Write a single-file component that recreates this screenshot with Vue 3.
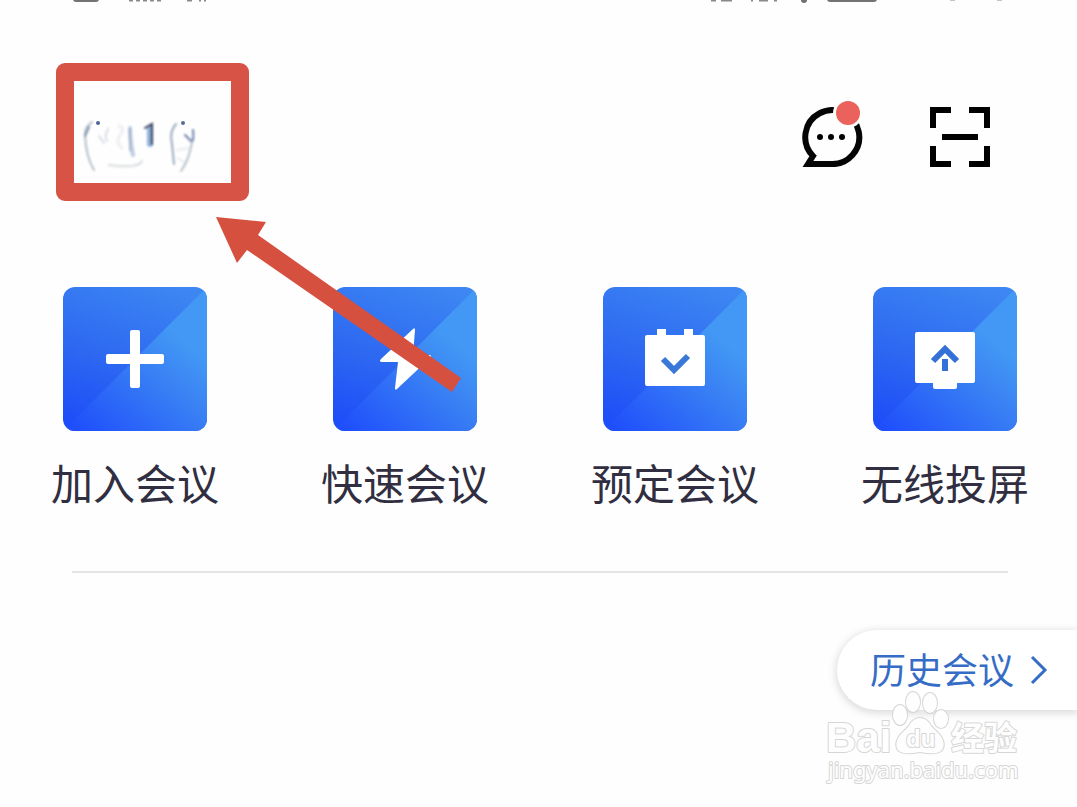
<script setup>
const actions = [
  { id: 'join', label: '加入会议' },
  { id: 'quick', label: '快速会议' },
  { id: 'schedule', label: '预定会议' },
  { id: 'cast', label: '无线投屏' },
]
</script>

<template>
  <main class="screen">
    <svg class="status" viewBox="0 0 1077 6" aria-hidden="true">
      <g fill="none" stroke="#757373" stroke-width="6" stroke-linecap="round">
        <path d="M76 -1H96" />
        <path d="M830 -1H874" />
      </g>
      <path d="M129 0h4M136 0h4M143 0h4M150 0h4M157 0h4M187 0h5M199 0h2M204 0h2M711 0h5M721 0h11M751 0h2M759 0h9M774 0h3" stroke="#8a8888" stroke-width="3" fill="none" />
      <circle cx="804" cy="0" r="3" fill="#707070" />
      <path d="M950 0h5M997 0h5" stroke="#c4c4c4" stroke-width="2" />
    </svg>

    <header class="header">
      <button class="profile" aria-label="个人资料">
        <svg viewBox="0 0 157 102" width="157" height="102" fill="none" stroke-linecap="round">
          <g class="smudge">
            <path d="M18 41Q10 47 11 54Q12 76 20 89" stroke="#b5bec8" stroke-width="2" />
            <path d="M11 55l4-9" stroke="#8094b0" stroke-width="2" />
            <path d="M25 55l5 7M34 48q-4 8-1 12" stroke="#d9dce6" stroke-width="2" />
            <path d="M45 45q7 3 1 9q-5 8 2 13" stroke="#f0eef0" stroke-width="3" />
            <path d="M56 47q0 12 3 27" stroke="#bccee2" stroke-width="4" />
            <path d="M56 48v22" stroke="#8293b0" stroke-width="1" />
            <path d="M35 84q12 2 23 1q8-1 10-5" stroke="#d9dbde" stroke-width="2" />
            <path d="M76 48v15" stroke="#8fb2d8" stroke-width="6" />
            <path d="M71 47l7-4v20" stroke="#35405e" stroke-width="2" />
            <path d="M102 43q-7 8-4 20l2 20" stroke="#9aabbf" stroke-width="2" />
            <path d="M111 54l7 7q2-3 1-12" stroke="#6c81a9" stroke-width="2" />
            <path d="M118 61q-3 18-11 29" stroke="#b9c2ca" stroke-width="2" />
            <path d="M103 69l12-2M104 77l6 4" stroke="#e8edef" stroke-width="2" />
          </g>
          <circle cx="24" cy="42" r="2" fill="#4c659a" />
          <circle cx="109" cy="42" r="2" fill="#5c6c90" />
        </svg>
      </button>
      <nav class="tools">
        <button class="tool" aria-label="消息">
          <svg viewBox="0 0 66 66" width="66" height="66">
            <path d="M32 63H10L15 55A27 27 0 1 1 32 63Z" fill="none" stroke="#050505" stroke-width="6" />
            <circle cx="50" cy="12" r="15" fill="#fefefe" />
            <circle cx="50" cy="12" r="12" fill="#eb625d" />
            <circle cx="22" cy="36" r="3" />
            <circle cx="33" cy="36" r="3" />
            <circle cx="44" cy="36" r="3" />
          </svg>
        </button>
        <button class="tool" aria-label="扫一扫">
          <svg viewBox="0 0 60 66" width="60" height="66" fill="none" stroke="#000" stroke-width="6">
            <path d="M3 27V9H21M39 9H57V27M57 45V63H39M21 63H3V45M12 36H48" />
          </svg>
        </button>
      </nav>
    </header>

    <section class="actions">
      <button v-for="action in actions" :key="action.id" class="action">
        <span class="tile">
          <svg viewBox="0 0 144 144" fill="#fff">
            <path v-if="action.id === 'join'" d="M69 43h6q2 0 2 2v22h22q2 0 2 2v6q0 2-2 2H77v22q0 2-2 2h-6q-2 0-2-2V77H45q-2 0-2-2v-6q0-2 2-2h22V45q0-2 2-2Z" />
            <path v-else-if="action.id === 'quick'" d="M80 42q2-2 2 1L80 68H97q2 1 0 3L64 102q-2 2-2-1L65 75H48q-2-1 0-3Z" />
            <template v-else-if="action.id === 'schedule'">
              <path d="M54 42h9v6h18v-6h9v6h10q2 0 2 2v47q0 2-2 2H44q-2 0-2-2V50q0-2 2-2h10Z" />
              <path d="M60 72L71 83L85 69" fill="none" stroke="#3978d9" stroke-width="6" />
            </template>
            <template v-else>
              <path d="M44 45h56q2 0 2 2v47q0 2-2 2H84v4q0 2-2 2H62q-2 0-2-2v-4H44q-2 0-2-2V47q0-2 2-2Z" />
              <path d="M60 74L72 62L84 74M72 72V84" fill="none" stroke="#3370d8" stroke-width="6" />
            </template>
          </svg>
        </span>
        <span class="label">{{ action.label }}</span>
      </button>
    </section>

    <hr class="divider" />

    <button class="history">
      <span class="history-text">历史会议</span>
      <svg viewBox="0 0 18 30" width="18" height="30" fill="none" stroke="#356dc6" stroke-width="3">
        <path d="M2 2L15 15L2 28" />
      </svg>
    </button>

    <svg class="arrow" viewBox="0 0 246 176" width="246" height="176" aria-hidden="true">
      <path d="M0 0L50 5L42 18L245 161L236 175L31 33L21 46Z" fill="#d65040" />
    </svg>

    <svg class="watermark" viewBox="0 0 210 100" width="210" height="100">
      <g class="mark">
        <text class="bai" x="6" y="62">Bai</text>
        <ellipse cx="80" cy="25" rx="7" ry="10" />
        <ellipse cx="93" cy="12" rx="7" ry="10" />
        <ellipse cx="110" cy="13" rx="7" ry="10" />
        <ellipse cx="121" cy="29" rx="7" ry="9" />
        <path d="M100 28q7 0 11 8l9 9q7 10 1 16-5 4-21 1-16 3-21-1-6-6 1-16l9-9q4-8 11-8Z" />
        <text class="du" x="86" y="57">du</text>
        <text class="experience" x="131" y="60">经验</text>
        <text class="site" x="8" y="88">jingyan.baidu.com</text>
      </g>
    </svg>
  </main>
</template>

<style>
body {
  margin: 0;
  background: #fefefe;
}
</style>

<style scoped>
.screen {
  position: relative;
  min-height: 100vh;
  overflow: hidden;
  display: flex;
  flex-direction: column;
  box-sizing: border-box;
  background: #fefefe;
  font-family: "Noto Sans CJK SC", sans-serif;
}

button {
  padding: 0;
  border: 0;
  background: none;
  font: inherit;
  cursor: pointer;
}

svg {
  display: block;
}

.status {
  width: 100%;
  height: 6px;
}

.header {
  display: flex;
  justify-content: space-between;
  align-items: flex-start;
  padding: 57px 87px 0 56px;
}

.profile {
  border: 18px solid #d65345;
  border-radius: 9px;
  background: #fefefe;
}

.smudge {
  filter: blur(1px);
}

.tools {
  display: flex;
  gap: 66px;
  padding-top: 38px;
}

.actions {
  display: flex;
  justify-content: space-between;
  padding: 86px 48px 0 51px;
}

.action {
  width: 168px;
  display: flex;
  flex-direction: column;
  align-items: center;
  gap: 20px;
  color: #302e40;
}

.tile {
  position: relative;
  width: 144px;
  height: 144px;
  overflow: hidden;
  border-radius: 12px;
  background: linear-gradient(20deg, #1d4df8 5%, #2d68f1 45%, #3d87f3 95%);
}

.tile::before {
  content: "";
  position: absolute;
  inset: 0;
  clip-path: polygon(100% 0, 100% 100%, 0 100%);
  background: linear-gradient(45deg, #1f4ffb 8%, #3a86f4 58%, #4298f4 75%);
  background: linear-gradient(40deg, #1f4ffb 5%, #3980f4 50%, #4298f4 72%);
}

.tile svg {
  position: relative;
}

.label {
  font-size: 42px;
  line-height: 62px;
  white-space: nowrap;
}

.divider {
  width: auto;
  height: 2px;
  margin: 58px 69px 0 72px;
  border: 0;
  background: #e3e4e5;
}

.history {
  align-self: flex-end;
  display: flex;
  align-items: center;
  gap: 16px;
  height: 80px;
  margin-top: 57px;
  padding: 0 29px 0 33px;
  border-radius: 40px 0 0 40px;
  background: #fff;
  box-shadow: 0 2px 8px 1px #d9d9d9;
  color: #356dc6;
  font-size: 36px;
  line-height: 54px;
}

.history-text {
  padding-bottom: 4px;
}

.arrow {
  position: absolute;
  top: 217px;
  left: 216px;
}

.watermark {
  position: absolute;
  right: 47px;
  bottom: 17px;
}

.mark {
  fill: #fefefe;
  stroke: #d6d6d6;
  stroke-width: 2px;
  paint-order: stroke;
  stroke-linejoin: round;
}

.bai {
  font: bold 42px "Liberation Sans", sans-serif;
}

.du {
  font: bold 24px "Liberation Sans", sans-serif;
}

.experience {
  font: bold 33px "Noto Sans CJK SC", sans-serif;
}

.site {
  font: 22px "Noto Sans", sans-serif;
}
</style>
